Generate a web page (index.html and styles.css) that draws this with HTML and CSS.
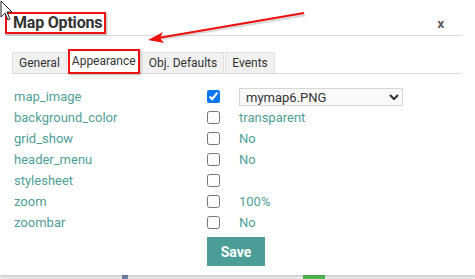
FILE: index.html
```html
<!DOCTYPE html>
<html lang="en">
<head>
    <meta charset="UTF-8">
    <title>Map Options</title>
    <link rel="stylesheet" href="styles.css">
</head>
<body>
    <div class="dialog">
        <div class="dialog-header">
            <h1 class="title marked">Map Options</h1>
            <span class="close">x</span>
        </div>
        <div class="tabs">
            <span class="tab">General</span>
            <span class="tab active marked">Appearance</span>
            <span class="tab">Obj. Defaults</span>
            <span class="tab">Events</span>
        </div>
        <div class="options">
            <label class="opt-name">map_image</label>
            <input type="checkbox" checked>
            <div class="opt-value">
                <select class="image-select">
                    <option>mymap6.PNG</option>
                </select>
            </div>

            <label class="opt-name">background_color</label>
            <input type="checkbox">
            <div class="opt-value">transparent</div>

            <label class="opt-name">grid_show</label>
            <input type="checkbox">
            <div class="opt-value">No</div>

            <label class="opt-name">header_menu</label>
            <input type="checkbox">
            <div class="opt-value">No</div>

            <label class="opt-name">stylesheet</label>
            <input type="checkbox">
            <div class="opt-value"></div>

            <label class="opt-name">zoom</label>
            <input type="checkbox">
            <div class="opt-value">100%</div>

            <label class="opt-name">zoombar</label>
            <input type="checkbox">
            <div class="opt-value">No</div>

            <span></span>
            <button class="save-button">Save</button>
        </div>
    </div>
    <div class="backdrop">
        <span class="bg-slash"></span>
        <span class="bg-green"></span>
    </div>

    <!-- annotation overlay -->
    <svg class="arrow" width="475" height="60" viewBox="0 0 475 60">
        <line x1="305" y1="15" x2="160" y2="39" stroke="#999" stroke-opacity="0.35" stroke-width="3"/>
        <line x1="304" y1="13" x2="158" y2="38" stroke="#f01010" stroke-width="2"/>
        <polygon points="148,40 163,32 160,38 164,43" fill="#f01010"/>
    </svg>
    <svg class="cursor" width="14" height="22" viewBox="0 0 14 22">
        <path d="M1 1 L1 17 L5 13 L8 20 L10 19 L7 12 L12 12 Z" fill="#fff" stroke="#222" stroke-width="1"/>
    </svg>
</body>
</html>
```

FILE: styles.css
```css
body {
    margin: 0;
    background-color: #ececec;
    font-family: Roboto, "Liberation Sans", sans-serif;
    width: 475px;
    height: 279px;
    overflow: hidden;
    position: relative;
}
.dialog {
    background-color: #fff;
    height: 275px;
    box-sizing: border-box;
    padding: 0 13px 0 12px;
    box-shadow: 0 1px 3px rgba(0, 0, 0, 0.2);
    position: relative;
    z-index: 1;
}
.dialog-header {
    height: 35px;
    border-bottom: 1px solid #dcdcdc;
    margin-left: -7px;
    display: flex;
    align-items: flex-end;
    justify-content: space-between;
}
.marked {
    border: 2px solid #ee1111;
    box-shadow: 1px 1px 2px rgba(0, 0, 0, 0.3);
}
.title {
    margin: 0 0 1px 0;
    padding: 0 2px 0 6px;
    font-size: 16px;
    letter-spacing: -0.2px;
    font-weight: bold;
    color: #333;
    line-height: 18px;
}
.close {
    font-size: 13px;
    font-weight: bold;
    color: #555;
    margin: 0 18px 4px 0;
}
.tabs {
    margin-top: 16px;
    display: flex;
    gap: 1px;
    border-bottom: 1px solid #dcdcdc;
    height: 21px;
}
.tab {
    font-size: 12px;
    color: #333;
    background-color: #f1f1f1;
    border: 1px solid #e0e0e0;
    border-bottom: none;
    padding: 0 6px;
    line-height: 20px;
}
.tab.active {
    background-color: #fff;
    border: 2px solid #ee1111;
    padding: 0 2px;
    margin: -3px 1px 0 0;
    height: 21px;
}
.options {
    display: grid;
    grid-template-columns: 193px 13px auto;
    grid-auto-rows: 21px;
    align-items: center;
    margin-top: 12px;
    padding-left: 2px;
    font-size: 13px;
    color: #4f9f97;
}
.options input[type=checkbox] {
    margin: 0;
    width: 13px;
    height: 13px;
    accent-color: #0a75f0;
}
.opt-value {
    padding-left: 19px;
}
.image-select {
    width: 164px;
    height: 18px;
    font-family: Roboto, "Liberation Sans", sans-serif;
    font-size: 13px;
    color: #333;
    background-color: #f9f9f9;
    border: 1px solid #d6d6d6;
    padding: 0 2px;
}
.save-button {
    grid-column: 2 / 4;
    margin-top: 16px;
    width: 58px;
    height: 29px;
    background-color: #4a9e97;
    color: #fff;
    font-weight: bold;
    font-size: 14px;
    border: none;
    font-family: Roboto, "Liberation Sans", sans-serif;
    cursor: pointer;
}
.backdrop {
    height: 4px;
    display: flex;
}
.bg-slash {
    width: 6px;
    height: 4px;
    margin-left: 122px;
    background-color: #6b84a8;
}
.bg-green {
    width: 22px;
    height: 4px;
    margin-left: 175px;
    background-color: #52b850;
}
.arrow {
    position: absolute;
    left: 0;
    top: 0;
    z-index: 2;
}
.cursor {
    position: absolute;
    left: 0;
    top: 0;
    z-index: 3;
}
```
